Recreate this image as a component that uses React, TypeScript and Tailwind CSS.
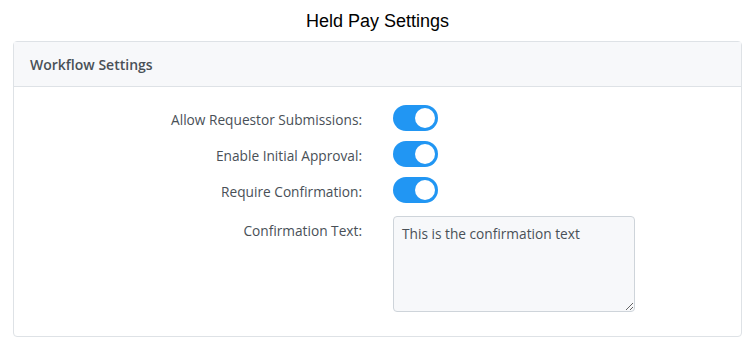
import { useState } from "react";

const labelFont = { fontFamily: '"Segoe UI", "Open Sans", "Noto Sans", sans-serif' };

function Toggle({ on, onChange }: { on: boolean; onChange: () => void }) {
  return (
    <button
      type="button"
      onClick={onChange}
      className={`flex h-[26px] w-[45px] items-center rounded-full px-[3px] ${
        on ? "justify-end bg-[#2196f3]" : "justify-start bg-[#ced4da]"
      }`}
    >
      <span className="block h-5 w-5 rounded-full bg-white" />
    </button>
  );
}

export default function App() {
  const [flags, setFlags] = useState({ requestor: true, initial: true, confirm: true });
  const [text, setText] = useState("This is the confirmation text");

  const rows: { key: keyof typeof flags; label: string }[] = [
    { key: "requestor", label: "Allow Requestor Submissions:" },
    { key: "initial", label: "Enable Initial Approval:" },
    { key: "confirm", label: "Require Confirmation:" },
  ];

  return (
    <div className="min-h-[345px] bg-white">
      <h1 className="flex h-[41px] items-center justify-center pt-[1px] text-[18px] text-black [font-family:'Liberation_Sans',Arial,sans-serif]">
        Held Pay Settings
      </h1>

      <div className="mx-[13px] rounded border border-[#dee2e6]" style={labelFont}>
        <div className="flex h-[45px] items-center border-b border-[#dee2e6] bg-[#f7f8fa] px-4 text-[14px] font-semibold text-[#495057]">
          Workflow Settings
        </div>

        <div className="pb-[24px] pt-[13px]">
          {rows.map((r) => (
            <div key={r.key} className="flex h-9 items-center">
              <div className="w-[349px] pr-[1px] pt-[5px] text-right text-[13.7px] text-[#495057]">
                {r.label}
              </div>
              <div className="ml-[30px]">
                <Toggle
                  on={flags[r.key]}
                  onChange={() => setFlags((f) => ({ ...f, [r.key]: !f[r.key] }))}
                />
              </div>
            </div>
          ))}

          <div className="mt-2 flex items-start">
            <div className="w-[349px] pr-[1px] pt-[5px] text-right text-[13.7px] text-[#495057]">
              Confirmation Text:
            </div>
            <textarea
              value={text}
              onChange={(e) => setText(e.target.value)}
              className="ml-[30px] h-[96px] w-[242px] rounded border border-[#ced4da] bg-[#f7f8fa] px-2 py-[7px] text-[13.7px] text-[#495057] outline-none"
              style={labelFont}
            />
          </div>
        </div>
      </div>
    </div>
  );
}
